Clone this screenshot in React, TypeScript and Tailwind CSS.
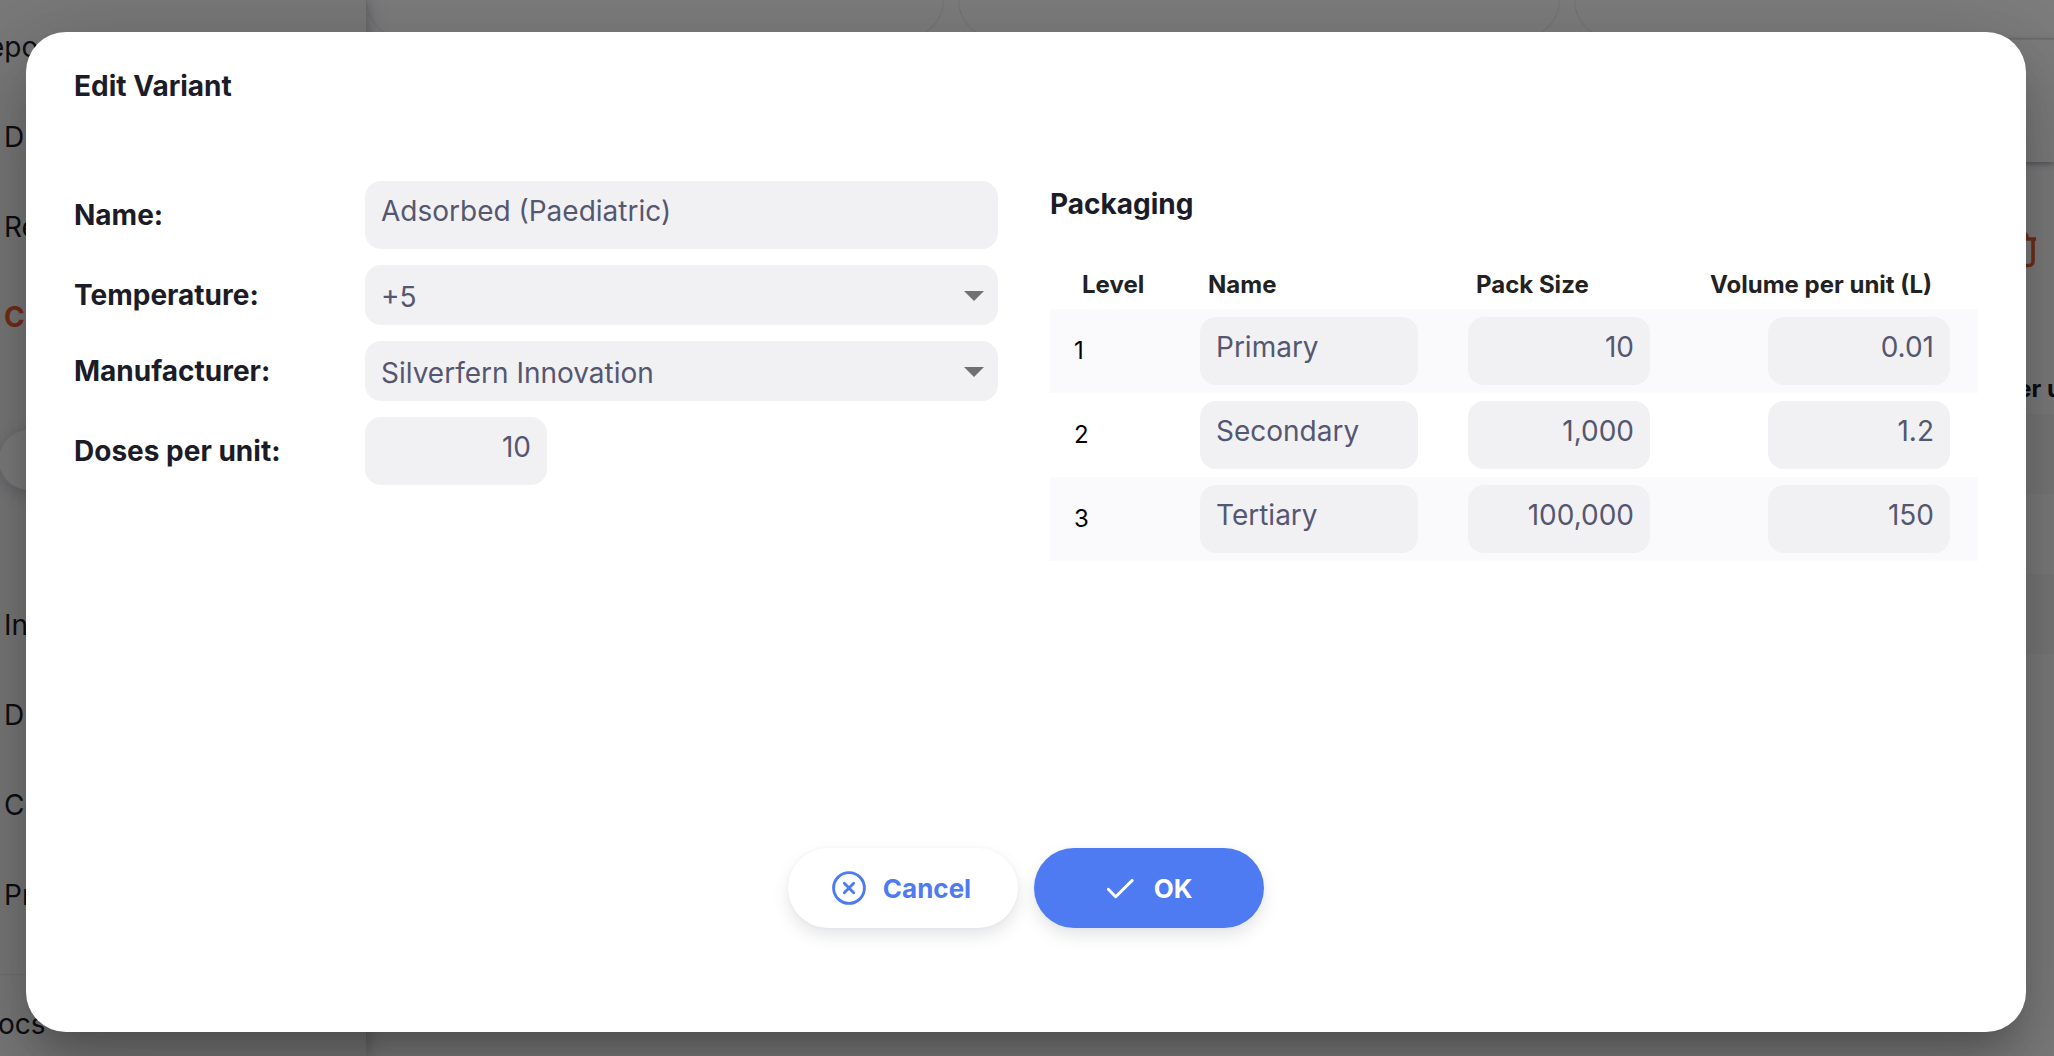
import React, { useState } from 'react';

interface PackagingRow {
  level: number;
  name: string;
  packSize: string;
  volume: string;
}

const INITIAL_ROWS: PackagingRow[] = [
  { level: 1, name: 'Primary', packSize: '10', volume: '0.01' },
  { level: 2, name: 'Secondary', packSize: '1,000', volume: '1.2' },
  { level: 3, name: 'Tertiary', packSize: '100,000', volume: '150' },
];

const INPUT_CLASS =
  'h-[68px] rounded-2xl bg-[#f1f1f4] px-4 pb-2 text-[28px] text-[#555770] outline-none';

const BUTTON_CLASS =
  'w-[230px] h-20 flex items-center justify-center gap-3.5 rounded-full pr-1.5 shadow-[0_8px_16px_rgba(96,97,112,0.16),0_0_4px_rgba(40,41,61,0.04)]';

const CancelIcon = () => (
  <svg className="w-10 h-10" viewBox="0 0 40 40" fill="none" stroke="currentColor" strokeWidth="2.9" strokeLinecap="round">
    <circle cx="20" cy="20" r="15.4" />
    <path d="M15.3 15.3l9.4 9.4M24.7 15.3l-9.4 9.4" />
  </svg>
);

const CheckIcon = () => (
  <svg className="w-10 h-10" viewBox="0 0 40 40" fill="none" stroke="currentColor" strokeWidth="2.9" strokeLinecap="round" strokeLinejoin="round">
    <path d="M8.3 21.3l7.4 7.4L32.2 12.4" />
  </svg>
);

const TrashIcon = () => (
  <svg className="w-10 h-10" viewBox="0 0 40 40" fill="none" stroke="currentColor" strokeWidth="3.6">
    <path d="M2 10h36M5 10v22.500a4 4 0 0 0 4 4h22a4 4 0 0 0 4-4v-22.500" />
    <path d="M11 10v-2a4 4 0 0 1 4-4h10a4 4 0 0 1 4 4v2M14 18v10M26 18v10" />
  </svg>
);

interface SelectFieldProps {
  id: string;
  options: string[];
}

function SelectField({ id, options }: SelectFieldProps) {
  return (
    <div className="relative flex-1">
      <select
        id={id}
        className="block w-full h-[60px] appearance-none rounded-2xl bg-[#f1f1f4] px-4 pt-1 text-[28px] text-[#555770] outline-none"
      >
        {options.map((option) => (
          <option key={option}>{option}</option>
        ))}
      </select>
      <svg className="absolute right-3.5 top-[26px] w-5 h-2.5 pointer-events-none" viewBox="0 0 20 10">
        <path d="M0 0h20L10 10z" fill="#707073" />
      </svg>
    </div>
  );
}

function FormRow({ id, label, children }: { id: string; label: string; children: React.ReactNode }) {
  return (
    <div className="flex items-center">
      <label htmlFor={id} className="w-[291px] shrink-0 text-[28px] font-bold">
        {label}
      </label>
      {children}
    </div>
  );
}

function NavItem({ text, active }: { text: string; active?: boolean }) {
  return (
    <div className={`h-[90px] flex items-center pl-1 ${active ? 'font-bold text-[#e95c30]' : ''}`}>
      {text}
    </div>
  );
}

// The page that stays visible around the edges of the dialog
function PageBehind() {
  return (
    <div aria-hidden="true" className="absolute inset-0 flex bg-[#fafafc] text-[28px] text-[#1c1c28] overflow-hidden">
      <div className="relative z-10 w-[366px] shrink-0 flex flex-col bg-[#f2f2f5] shadow-[0_0_16px_rgba(96,97,112,0.5)]">
        <div className="-ml-4 pt-0.5">
          <NavItem text="epo" />
        </div>
        <NavItem text="D" />
        <NavItem text="Re" />
        <NavItem text="C" active />
        <div className="-ml-px mt-[68px] h-[60px] w-40 rounded-full bg-[#fafafc] shadow-[0_4px_16px_rgba(96,97,112,0.3)]" />
        <div className="mt-[90px]">
          <NavItem text="In" />
          <NavItem text="D" />
          <NavItem text="Co" />
          <NavItem text="Pr" />
        </div>
        <div className="-ml-1.5 mt-auto h-[82px] border-t border-[#e4e4eb] pt-1">
          <NavItem text="ocs" />
        </div>
      </div>

      <div className="flex-1 min-w-0 flex flex-col">
        <div className="grid grid-cols-[578fr_602fr_480fr] gap-3.5 h-[39px]">
          <div className="rounded-b-[40px] border border-t-0 border-[#e8e8ed]" />
          <div className="rounded-b-[40px] border border-t-0 border-[#e8e8ed]" />
          <div className="rounded-bl-[40px] border border-t-0 border-r-0 border-[#e8e8ed]" />
        </div>
        <div className="h-[123px] border-t border-[#e4e4eb] shadow-[0_2px_6px_rgba(40,41,61,0.4)]" />
        <div className="flex flex-col items-end">
          <div className="mt-[67px] mr-4 text-[#e95c30]">
            <TrashIcon />
          </div>
          <div className="mt-[104px] h-[41px] -mr-2 text-2xl font-bold">er u</div>
          <div className="w-full h-20 bg-[#f2f2f5]" />
          <div className="mt-20 w-full h-20 bg-[#f2f2f5]" />
        </div>
      </div>
    </div>
  );
}

export default function App() {
  const [name, setName] = useState('Adsorbed (Paediatric)');
  const [doses, setDoses] = useState('10');
  const [rows, setRows] = useState(INITIAL_ROWS);

  const updateRow = (index: number, patch: Partial<PackagingRow>) => {
    setRows(rows.map((row, i) => (i === index ? { ...row, ...patch } : row)));
  };

  return (
    <div className="relative h-screen overflow-hidden font-['Inter',sans-serif]">
      <PageBehind />

      <div className="absolute inset-0 z-20 bg-black/50 flex pt-8 pb-6 pl-[26px] pr-7">
        <div
          role="dialog"
          aria-labelledby="dialog-title"
          className="flex-1 min-w-0 flex flex-col rounded-[40px] bg-white px-12 pt-9 pb-[104px] text-[#1c1c28] shadow-[0_22px_30px_-14px_rgba(0,0,0,0.2),0_48px_76px_6px_rgba(0,0,0,0.14),0_18px_92px_16px_rgba(0,0,0,0.12)]"
        >
          <h2 id="dialog-title" className="text-[28px] leading-9 font-bold">
            Edit Variant
          </h2>

          <div className="mt-[77px] grid grid-cols-[924fr_928fr] gap-x-[52px] items-start">
            <form className="flex flex-col gap-4">
              <FormRow id="name" label="Name:">
                <input
                  id="name"
                  type="text"
                  value={name}
                  onChange={(e) => setName(e.target.value)}
                  className={`${INPUT_CLASS} flex-1 min-w-0`}
                />
              </FormRow>
              <FormRow id="temperature" label="Temperature:">
                <SelectField id="temperature" options={['+5']} />
              </FormRow>
              <FormRow id="manufacturer" label="Manufacturer:">
                <SelectField id="manufacturer" options={['Silverfern Innovation']} />
              </FormRow>
              <FormRow id="doses" label="Doses per unit:">
                <input
                  id="doses"
                  type="text"
                  value={doses}
                  onChange={(e) => setDoses(e.target.value)}
                  className={`${INPUT_CLASS} w-[182px] text-right`}
                />
              </FormRow>
            </form>

            <section>
              <h3 className="mb-[34px] text-[28px] leading-[46px] font-bold">Packaging</h3>
              <table className="w-full table-fixed text-2xl">
                <thead className="text-[#222222]">
                  <tr className="h-12">
                    <th className="w-[150px] pl-8 text-left font-bold">Level</th>
                    <th className="w-[268px] pl-2 text-left font-bold">Name</th>
                    <th className="w-[182px] pl-2 text-left font-bold">Pack Size</th>
                    <th className="pr-[46px] text-right font-bold">Volume per unit (L)</th>
                  </tr>
                </thead>
                <tbody>
                  {rows.map((row, i) => (
                    <tr key={row.level} className="h-[84px] odd:bg-[#fafafc]">
                      <td className="pl-6 text-black">{row.level}</td>
                      <td>
                        <input
                          type="text"
                          aria-label="Name"
                          value={row.name}
                          onChange={(e) => updateRow(i, { name: e.target.value })}
                          className={`${INPUT_CLASS} block w-[218px]`}
                        />
                      </td>
                      <td>
                        <input
                          type="text"
                          aria-label="Pack Size"
                          value={row.packSize}
                          onChange={(e) => updateRow(i, { packSize: e.target.value })}
                          className={`${INPUT_CLASS} block w-[182px] text-right`}
                        />
                      </td>
                      <td className="pr-7">
                        <input
                          type="text"
                          aria-label="Volume per unit (L)"
                          value={row.volume}
                          onChange={(e) => updateRow(i, { volume: e.target.value })}
                          className={`${INPUT_CLASS} block ml-auto w-[182px] text-right`}
                        />
                      </td>
                    </tr>
                  ))}
                </tbody>
              </table>
            </section>
          </div>

          <div className="mt-auto flex justify-center gap-4 text-[26px] font-bold">
            <button type="button" className={`${BUTTON_CLASS} bg-white text-[#4e7bf2]`}>
              <CancelIcon />
              Cancel
            </button>
            <button type="button" className={`${BUTTON_CLASS} bg-[#4e7bf2] text-white`}>
              <CheckIcon />
              OK
            </button>
          </div>
        </div>
      </div>
    </div>
  );
}
